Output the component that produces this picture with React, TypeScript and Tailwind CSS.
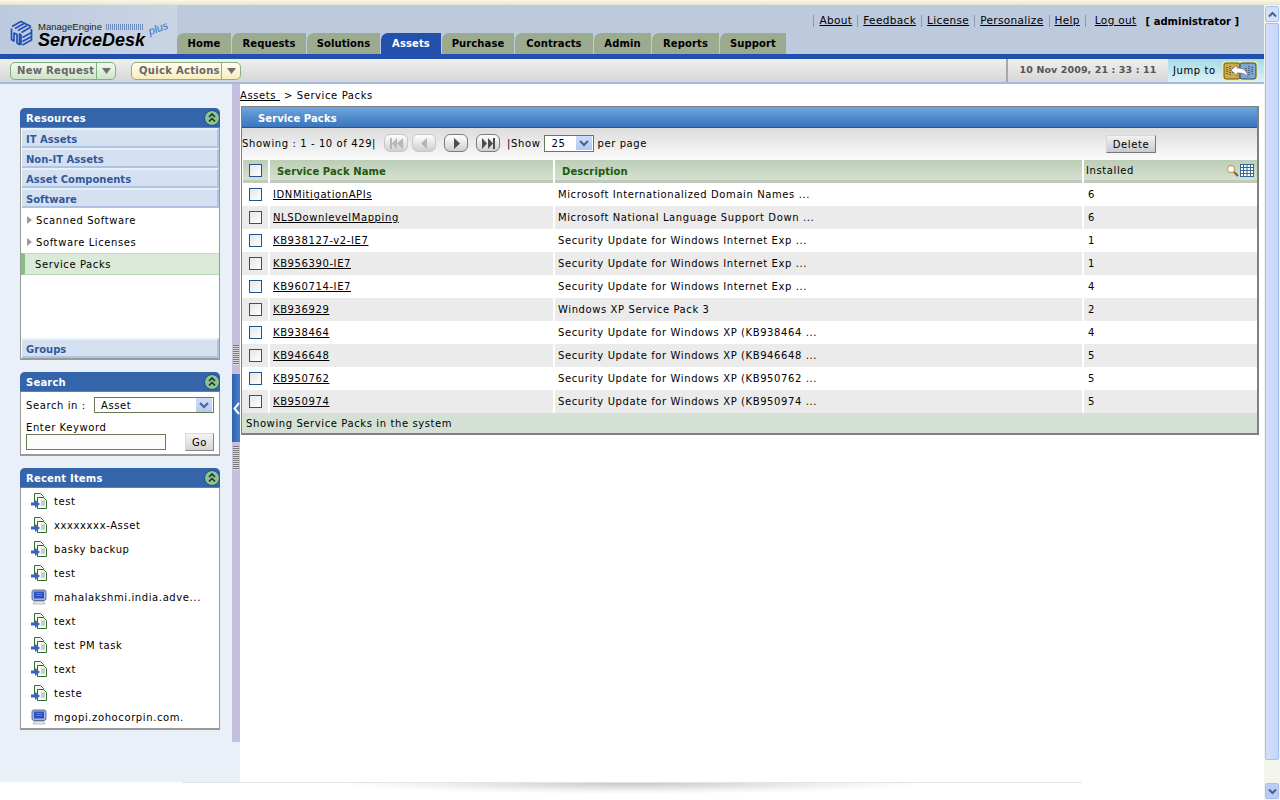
const tabs = [
  { label: "Home", w: "w-[54px]" },
  { label: "Requests", w: "w-[74px]" },
  { label: "Solutions", w: "w-[73px]" },
  { label: "Assets", w: "w-[60px]", active: true },
  { label: "Purchase", w: "w-[72px]" },
  { label: "Contracts", w: "w-[78px]" },
  { label: "Admin", w: "w-[57px]" },
  { label: "Reports", w: "w-[67px]" },
  { label: "Support", w: "w-[66px]" },
];

const topLinks = ["About", "Feedback", "License", "Personalize", "Help"];

const packs = [
  ["IDNMitigationAPIs", "Microsoft Internationalized Domain Names ...", "6"],
  ["NLSDownlevelMapping", "Microsoft National Language Support Down ...", "6"],
  ["KB938127-v2-IE7", "Security Update for Windows Internet Exp ...", "1"],
  ["KB956390-IE7", "Security Update for Windows Internet Exp ...", "1"],
  ["KB960714-IE7", "Security Update for Windows Internet Exp ...", "4"],
  ["KB936929", "Windows XP Service Pack 3", "2"],
  ["KB938464", "Security Update for Windows XP (KB938464 ...", "4"],
  ["KB946648", "Security Update for Windows XP (KB946648 ...", "5"],
  ["KB950762", "Security Update for Windows XP (KB950762 ...", "5"],
  ["KB950974", "Security Update for Windows XP (KB950974 ...", "5"],
];

const recent = [
  ["test", "doc"],
  ["xxxxxxxx-Asset", "doc"],
  ["basky backup", "doc"],
  ["test", "doc"],
  ["mahalakshmi.india.adve...", "pc"],
  ["text", "doc"],
  ["test PM task", "doc"],
  ["text", "doc"],
  ["teste", "doc"],
  ["mgopi.zohocorpin.com.", "pc"],
];

const Collapse = () => (
  <svg width="16" height="16" viewBox="0 0 16 16">
    <circle cx="8" cy="8" r="7.5" fill="#8fc08f" stroke="#1d4a86" />
    <path d="M5 7l3-3 3 3M5 11.5l3-3 3 3" fill="none" stroke="#10301c" strokeWidth="1.5" />
  </svg>
);

const PanelHead = ({ title }: { title: string }) => (
  <div className="h-[20px] bg-[#3464a9] rounded-t-[5px] flex items-center justify-between pl-[6px] border-b border-[#6f8a4f]">
    <span className="pt-[2px] text-[10px] tracking-[0.2px] font-bold text-white">{title}</span>
    <Collapse />
  </div>
);

const Accordion = ({ label }: { label: string }) => (
  <div className="h-[20px] pt-[3px] bg-[#d5e0f0] border-t-2 border-t-[#e4f3fb] border-b-2 border-b-[#b0c4e2] border-r-2 border-r-[#b0c4e2] ml-px flex items-center pl-[4px] text-[10px] tracking-normal font-bold text-[#2f5a9c]">
    {label}
  </div>
);

const Check = () => (
  <span className="block w-[13px] h-[13px] border border-[#1f5596] bg-gradient-to-br from-[#e6e6e6] to-white" />
);

const Tri = () => (
  <svg width="5" height="8" viewBox="0 0 5 8"><path d="M0 0l5 4-5 4z" fill="#9a9a9a" /></svg>
);

const DocIcon = () => (
  <svg width="16" height="16" viewBox="0 0 16 16">
    <path d="M3.500.5h6l3 3v8h-9z" fill="#f4f8f0" stroke="#2c6e2c" />
    <path d="M6.500 4.500h6l3 3v8h-9z" fill="#f8fbf5" stroke="#2c6e2c" />
    <path d="M10 8h4M10 10h4M10 12h4" stroke="#9aa0a0" />
    <path d="M0 9.500h4V7l5 4-5 4v-2.500H0z" fill="#3c5fc8" />
  </svg>
);

const PcIcon = () => (
  <svg width="16" height="16" viewBox="0 0 16 16">
    <rect x="1" y="1" width="14" height="10.500" rx="2" fill="#9fb4d8" stroke="#5f7396" />
    <rect x="3" y="2.500" width="10" height="7" fill="#2c50c4" />
    <path d="M5 4.500h6M5 6.500h6" stroke="#5d7cdc" />
    <path d="M3 12.500h10l1 2.500H2z" fill="#e8e8e8" stroke="#a0a8b8" strokeWidth=".7" />
  </svg>
);

const NavBtn = ({ d, dim, className }: { d: string; dim?: boolean; className?: string }) => (
  <span className={`w-[24px] h-[18px] rounded-[6px] border flex items-center justify-center bg-gradient-to-b from-white to-[#cfcfcf] ${dim ? "border-[#c8c8c8]" : "border-[#7c7c7c]"} ${className ?? ""}`}>
    <svg width="13" height="11" viewBox="0 0 13 11"><path d={d} fill={dim ? "#b5b5b5" : "#4c4c4c"} /></svg>
  </span>
);

const SelectArrow = () => (
  <span className="w-[16px] h-[14px] bg-gradient-to-b from-[#cfdcfb] to-[#b4c8f6] flex items-center justify-center">
    <svg width="10" height="7" viewBox="0 0 10 7"><path d="M1 1l4 4 4-4" fill="none" stroke="#4d6185" strokeWidth="2" /></svg>
  </span>
);

const Caret = () => (
  <svg width="9" height="6" viewBox="0 0 9 6"><path d="M0 0h9L4.500 6z" fill="#6f6f6f" /></svg>
);

const headCell = "bg-gradient-to-b from-[#bccdb6] to-[#d6e1d0] border-b-[3px] border-[#c0cabc] flex items-center";

export default function App() {
  return (
    <div className="w-[1280px] h-[800px] overflow-hidden flex flex-col bg-white text-black font-['DejaVu_Sans',sans-serif] text-[10px] tracking-[0.6px]">
      <div className="h-[5px] shrink-0 bg-gradient-to-b from-[#fbf8e8] to-[#e8e3d0]" />
      <div className="flex flex-1 min-h-0">
        <div className="w-[1264px] flex flex-col">
          {/* header */}
          <div className="h-[49px] shrink-0 flex bg-[#bdcadd]">
            <div className="w-[177px] shrink-0 flex items-end pl-[10px] pb-[8px] gap-[5px] bg-gradient-to-r from-[#bdcadd] to-[#c9d4e4]">
              <svg width="23" height="26" viewBox="0 0 23 26">
                <g fill="none" stroke="#2450b8" strokeWidth="1.700" strokeLinejoin="round">
                  <path d="M2 6.500L11 1.500l10 5M5 8.500L14 3.500M8 10.500L17 5.500M11.500 12.500L21 7" />
                  <path d="M1.500 8.500v11l2.500 1.500v-8l3 1.500v8.500l2.500 1.500V14l1.500 1v10" />
                  <path d="M21.500 9v11l-9 5M21.500 12.500l-9 5M21.500 16.500l-9 5" />
                </g>
              </svg>
              <div className="relative -mb-[2px]">
                <div className="text-[9.500px] leading-[10px] tracking-normal text-[#222] font-['Liberation_Sans',sans-serif] flex items-center gap-[4px]">
                  ManageEngine
                  <span className="w-[37px] h-[6px] bg-[repeating-linear-gradient(90deg,#6d8cc0_0_1px,transparent_1px_2px)]" />
                </div>
                <div className="text-[18px] leading-[16px] font-bold italic tracking-normal text-black font-['Liberation_Sans',sans-serif]">ServiceDesk</div>
                <span className="absolute left-[110px] top-[-2px] text-[11px] italic tracking-normal text-[#3d6fc4] font-['Liberation_Sans',sans-serif] -rotate-[20deg]">plus</span>
              </div>
            </div>
            <div className="flex-1 flex flex-col justify-between">
              <div className="flex justify-end items-center pt-[9px] pr-[25px] h-[23px] text-[10.5px] tracking-[0.35px]">
                {topLinks.map((l) => (
                  <span key={l} className="flex items-center">
                    <span className="border-l border-[#8e9aaa] h-[12px] mr-[5px]" />
                    <span className="underline mr-[5px]">{l}</span>
                  </span>
                ))}
                <span className="border-l border-[#8e9aaa] h-[12px] mr-[9px]" />
                <span className="underline mr-[9px]">Log out</span>
                <span className="font-bold text-[10px] tracking-normal">[ administrator ]</span>
              </div>
              <div className="flex">
                {tabs.map((t) => (
                  <div
                    key={t.label}
                    className={`${t.w} h-[21px] mr-px rounded-tl-[7px] flex items-center justify-center text-[10px] tracking-[0.1px] font-bold ${t.active ? "bg-[#2250ac] text-white" : "bg-[#9caa8f] text-black"}`}
                  >
                    {t.label}
                  </div>
                ))}
              </div>
            </div>
          </div>
          <div className="h-[5px] shrink-0 bg-[#2250ac]" />

          {/* toolbar */}
          <div className="h-[25px] shrink-0 flex items-center border-b-2 border-[#9fbbe0] bg-gradient-to-b from-[#f0f0f0] to-[#d6d6d6]">
            <div className="flex-1 flex items-center pl-[10px] gap-[15px]">
              <div className="w-[106px] h-[18px] rounded-[5px] border border-[#7fb07f] flex bg-gradient-to-b from-[#f4faf0] to-[#cfe3c8]">
                <span className="flex-1 flex items-center pl-[6px] whitespace-nowrap text-[10px] tracking-[0.3px] font-bold text-[#666]">New Request</span>
                <span className="w-[19px] border-l border-[#7fb07f] flex items-center justify-center"><Caret /></span>
              </div>
              <div className="w-[110px] h-[18px] rounded-[5px] border border-[#8fb07f] flex bg-gradient-to-b from-[#fffdf0] to-[#f7eebc]">
                <span className="flex-1 flex items-center pl-[7px] whitespace-nowrap text-[10px] tracking-[0.3px] font-bold text-[#666]">Quick Actions</span>
                <span className="w-[19px] border-l border-[#8fb07f] flex items-center justify-center"><Caret /></span>
              </div>
            </div>
            <div className="w-[162px] h-full border-l-2 border-[#a8a8a8] flex items-center justify-center font-bold text-[#555] text-[9.500px] tracking-[0.1px]">
              10 Nov 2009, 21 : 33 : 11
            </div>
            <div className="w-[96px] h-full flex items-center pl-[5px] gap-[6px] bg-gradient-to-b from-[#a6dbe8] to-[#dcf1f5]">
              <span className="whitespace-nowrap">Jump to</span>
              <svg width="36" height="20" viewBox="0 0 36 20">
                <rect x="0.500" y="0.500" width="35" height="19" rx="2" fill="#ffee80" />
                <rect x="2" y="2" width="16" height="16" rx="2" fill="#cfa94a" stroke="#6a5a2a" />
                <rect x="18" y="2" width="16" height="16" rx="2" fill="#7fa7cf" stroke="#2a4a6a" />
                <path d="M5 6v8M8 5v10M11 7v6M30 6v8M27 5v10M24 7v6" stroke="#222" strokeDasharray="1 1" />
                <path d="M9 9l6-5v3c6 0 10 2 11 9-2-3-5-4-11-4v3z" fill="#fff" stroke="#555" strokeWidth=".6" />
              </svg>
            </div>
          </div>

          {/* body */}
          <div className="h-[698px] shrink-0 flex">
            <div className="w-[240px] shrink-0 flex bg-[#e9f0f8]">
              <aside className="w-[232px] shrink-0 pt-[24px] pl-[20px]">
                <div className="w-[200px] flex flex-col gap-[12px]">
                  <div className="h-[252px] flex flex-col border-b-2 border-x border-[#9a9a9a] bg-white rounded-t-[5px]">
                    <div className="-mx-px"><PanelHead title="Resources" /></div>
                    <Accordion label="IT Assets" />
                    <Accordion label="Non-IT Assets" />
                    <Accordion label="Asset Components" />
                    <Accordion label="Software" />
                    <div className="h-[22px] mt-px flex items-center pl-[6px] gap-[4px]"><Tri /><span>Scanned Software</span></div>
                    <div className="h-[22px] flex items-center pl-[6px] gap-[4px]"><Tri /><span>Software Licenses</span></div>
                    <div className="h-[22px] flex items-center pl-[10px] bg-[#dbe9d8] border-l-[4px] border-l-[#86bb82] border-t border-t-[#cbd8c8] border-b border-b-[#b5d8b2]">Service Packs</div>
                    <div className="flex-1" />
                    <Accordion label="Groups" />
                  </div>

                  <div className="h-[84px] flex flex-col border-b-2 border-x border-[#9a9a9a] bg-white rounded-t-[5px]">
                    <div className="-mx-px"><PanelHead title="Search" /></div>
                    <div className="flex items-center pl-[5px] pt-[5px]">
                      <span className="w-[68px]">Search in :</span>
                      <span className="w-[120px] h-[16px] border border-[#6a7a50] flex items-center justify-between pl-[6px] pr-[1px]">
                        Asset
                        <SelectArrow />
                      </span>
                    </div>
                    <div className="pl-[5px] pt-[9px] leading-[12px]">Enter Keyword</div>
                    <div className="flex items-start justify-between pl-[5px] pr-[5px]">
                      <span className="w-[140px] h-[16px] border border-[#6a7a50] bg-[#fcfcfc]" />
                      <span className="w-[29px] h-[18px] -mt-px border border-[#d8d8d8] border-r-[#888] border-b-[#888] bg-gradient-to-b from-[#f4f4f4] to-[#d4d4d4] flex items-center justify-center">Go</span>
                    </div>
                  </div>

                  <div className="flex flex-col border-b-2 border-x border-[#9a9a9a] bg-white rounded-t-[5px]">
                    <div className="-mx-px"><PanelHead title="Recent Items" /></div>
                    <div className="pt-[1px] h-[240px]">
                      {recent.map(([name, kind], i) => (
                        <div key={i} className="h-[24px] flex items-center pl-[10px] gap-[7px]">
                          {kind === "doc" ? <DocIcon /> : <PcIcon />}
                          <span>{name}</span>
                        </div>
                      ))}
                    </div>
                  </div>
                </div>
              </aside>

              {/* splitter */}
              <div className="w-[8px] h-[658px] shrink-0 flex flex-col items-center bg-[#c5bfe0]">
                <div className="h-[290px] flex items-end pb-[9px]">
                  <span className="block w-[6px] h-[20px] bg-[repeating-linear-gradient(180deg,#777_0_1px,#ddd_1px_2px)]" />
                </div>
                <div className="w-[8px] h-[68px] bg-gradient-to-r from-[#2f62b0] to-[#4a80c8] flex items-center justify-center">
                  <svg width="7" height="13" viewBox="0 0 7 13"><path d="M6 1L1.500 6.500 6 12" fill="none" stroke="#fff" strokeWidth="2" /></svg>
                </div>
                <div className="pt-[4px]">
                  <span className="block w-[6px] h-[24px] bg-[repeating-linear-gradient(180deg,#777_0_1px,#ddd_1px_2px)]" />
                </div>
              </div>
            </div>

            <main className="flex-1 bg-white">
              <div className="h-[22px] pt-[2px] flex items-center leading-none">
                <span className="underline">Assets&nbsp;</span>
                <span className="ml-[4px]">&gt; Service Packs</span>
              </div>
              <div className="w-[1018px] ml-px border border-[#808080] border-b-2 border-r-2">
                <div className="h-[21px] pt-[3px] bg-gradient-to-b from-[#6ea6de] to-[#3a74bc] border-b border-[#1f5596] flex items-center pl-[16px] text-[10px] tracking-[0.1px] font-bold text-white">
                  Service Packs
                </div>
                <div className="h-[32px] pb-[2px] flex items-center bg-gradient-to-b from-[#dcdcdc] to-[#fbfbfb]">
                  <span className="whitespace-nowrap">Showing : 1 - 10 of 429|</span>
                  <div className="flex ml-[8px] mr-[7px]">
                    <NavBtn dim d="M0 0h2v11H0zM7 0v11L2 5.500zM13 0v11L7 5.500z" />
                    <NavBtn dim className="ml-[4px]" d="M9 0v11L3 5.500z" />
                    <NavBtn className="ml-[8px]" d="M4 0v11l6-5.500z" />
                    <NavBtn className="ml-[8px]" d="M0 0v11l5-5.500zM6 0v11l5-5.500zM11 0h2v11h-2z" />
                  </div>
                  <span>|Show</span>
                  <span className="w-[50px] h-[17px] ml-[4px] border border-[#6a7a50] bg-white flex items-center justify-between pl-[6px] pr-[1px]">
                    25
                    <SelectArrow />
                  </span>
                  <span className="ml-[3px]">per page</span>
                  <span className="ml-auto mr-[101px] mt-[2px] w-[50px] h-[18px] border border-[#d8d8d8] border-r-[#777] border-b-[#777] bg-gradient-to-b from-[#f2f2f2] to-[#c9c9d0] flex items-center justify-center">Delete</span>
                </div>

                <div className="flex h-[23px] pl-[1px] bg-white">
                  <div className="w-[27px] border-r-2 border-r-white">
                    <div className={`${headCell} h-full justify-center pr-[1px]`}><Check /></div>
                  </div>
                  <div className="w-[285px] border-r-2 border-r-white">
                    <div className={`${headCell} h-full pl-[7px] pt-[3px] font-bold text-[#1d5a10] tracking-[0.1px]`}>Service Pack Name</div>
                  </div>
                  <div className="w-[529px] border-r-2 border-r-white">
                    <div className={`${headCell} h-full pl-[7px] pt-[3px] font-bold text-[#1d5a10] tracking-[0.1px]`}>Description</div>
                  </div>
                  <div className={`${headCell} flex-1 justify-between pl-[2px] pr-[3px] pt-[1px]`}>
                    <span>Installed</span>
                    <span className="flex items-center gap-[1px]">
                      <svg width="13" height="13" viewBox="0 0 13 13">
                        <circle cx="5" cy="5" r="3.500" fill="#fff" stroke="#c9a55a" strokeWidth="1.300" />
                        <path d="M8 8l4 4" stroke="#8a5a2a" strokeWidth="2" />
                      </svg>
                      <svg width="14" height="13" viewBox="0 0 14 13">
                        <rect x="0.500" y="0.500" width="13" height="12" fill="#fff" stroke="#336699" />
                        <path d="M0 3.500h14M0 6.500h14M0 9.500h14M3.500 0v13M7 0v13M10.500 0v13" stroke="#336699" />
                      </svg>
                    </span>
                  </div>
                </div>

                {packs.map(([name, desc, n], i) => (
                  <div key={name} className={`h-[23px] flex pl-[1px] ${i % 2 ? "bg-[#ebebeb]" : "bg-white"}`}>
                    <div className="w-[27px] border-r-2 border-r-white flex items-center justify-center"><Check /></div>
                    <div className="w-[285px] border-r-2 border-r-white flex items-center pl-[3px]"><span className="underline">{name}</span></div>
                    <div className="w-[529px] border-r-2 border-r-white flex items-center pl-[3px]"><span>{desc}</span></div>
                    <div className="flex-1 flex items-center pl-[4px]">{n}</div>
                  </div>
                ))}

                <div className="h-[20px] bg-[#d3e0d3] flex items-center pl-[4px]">Showing Service Packs in the system</div>
              </div>
            </main>
          </div>

          {/* bottom shadow */}
          <div className="flex-1 bg-white">
            <div className="ml-[182px] w-[900px] h-[1px] bg-[#e4e4e4]" />
            <div className="mx-auto w-[600px] h-[11px] bg-[radial-gradient(ellipse_at_top,#c8c8c4_0%,#efefed_45%,#ffffff_70%)]" />
          </div>
        </div>

        {/* scrollbar */}
        <div className="w-[16px] h-[795px] shrink-0 flex flex-col bg-[#f3f5ec]">
          <div className="h-[16px] shrink-0 mt-[1px] mx-[1px] rounded-[2px] border border-[#a8c0ec] bg-[#d2e0fb] flex items-center justify-center">
            <svg width="9" height="7" viewBox="0 0 9 7"><path d="M1 5.500l3.500-3.500 3.500 3.500" fill="none" stroke="#4d6185" strokeWidth="2" /></svg>
          </div>
          <div className="h-[737px] shrink-0 mx-[1px] mt-px rounded-[2px] border border-[#a8c0ec] bg-gradient-to-r from-[#d2e0fb] to-[#c4d6f8]" />
          <div className="flex-1" />
          <div className="h-[16px] shrink-0 mb-[1px] mx-[1px] rounded-[2px] border border-[#a8c0ec] bg-[#b8ccf6] flex items-center justify-center">
            <svg width="9" height="7" viewBox="0 0 9 7"><path d="M1 1.500l3.500 3.500 3.500-3.500" fill="none" stroke="#4d6185" strokeWidth="2" /></svg>
          </div>
        </div>
      </div>
    </div>
  );
}
